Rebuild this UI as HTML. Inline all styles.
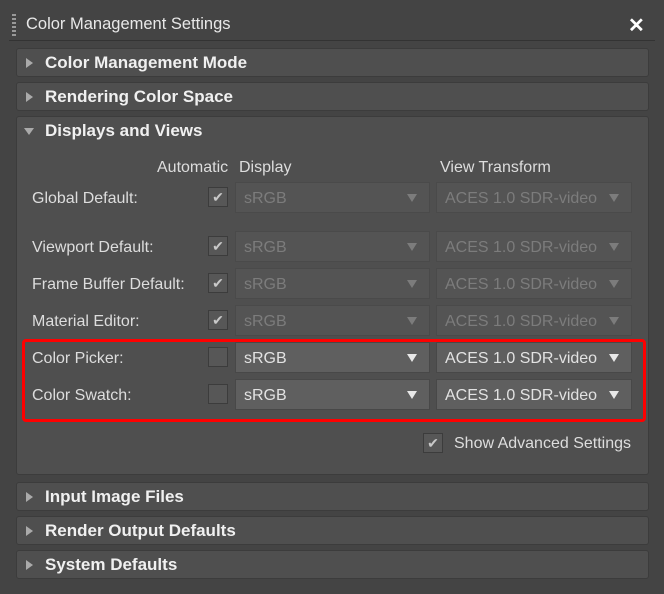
<!DOCTYPE html><html><head><style>
*{margin:0;padding:0;box-sizing:border-box}
body{width:664px;height:594px;background:#444;font-family:"Liberation Sans",sans-serif;font-size:16px;color:#ddd;position:relative;overflow:hidden}
.a{position:absolute}
.bar{position:absolute;left:16px;width:633px;height:29px;background:#4f4f4f;border:1px solid #3c3c3c;border-radius:3px}
.bar b{position:absolute;left:28px;top:4px;font-size:17px;color:#f0f0f0}
.tri{position:absolute;left:9px;top:9px;width:0;height:0;border-left:7px solid #aaa;border-top:5px solid transparent;border-bottom:5px solid transparent}
.lbl{position:absolute;left:32px;font-size:16px;color:#ddd}
.dd{position:absolute;height:31px;border:1px solid #4a4a4a;background:#545454;color:#7c7c7c;padding:7px 8px 0;font-size:16px}
.dd.on{background:#5f5f5f;color:#e2e2e2;border-color:#484848}
.dd:after{content:"";position:absolute;right:12px;top:11px;border-top:8px solid #7c7c7c;border-left:5px solid transparent;border-right:5px solid transparent}
.dd.on:after{border-top-color:#e8e8e8}
.cb{position:absolute;left:208px;width:20px;height:20px;background:#575757;border:1px solid #3c3c3c;color:#c8c8c8;font-size:14px;line-height:18px;text-align:center}
</style></head><body>
<div class="a" style="left:12px;top:14px;width:4px;height:22px;border-left:2px dotted #999;border-right:2px dotted #999"></div>
<div class="a" style="left:26px;top:15px;font-size:16.5px;color:#e8e8e8">Color Management Settings</div>
<div class="a" style="left:628px;top:13px;font-size:20px;font-weight:bold;color:#fff">✕</div>
<div class="a" style="left:9px;top:40px;width:646px;height:1px;background:#333"></div>
<div class="bar" style="top:48px"><span class="tri"></span><b>Color Management Mode</b></div>
<div class="bar" style="top:82px"><span class="tri"></span><b>Rendering Color Space</b></div>
<div class="bar" style="top:116px;height:359px"><span class="a" style="left:7px;top:11px;border-top:7px solid #aaa;border-left:5px solid transparent;border-right:5px solid transparent"></span><b>Displays and Views</b></div>
<div class="a" style="left:157px;top:159px">Automatic</div>
<div class="a" style="left:239px;top:159px">Display</div>
<div class="a" style="left:440px;top:159px">View Transform</div>

<div class="lbl" style="top:190px">Global Default:</div>
<div class="cb" style="top:187px">✔</div>
<div class="dd" style="left:235px;top:182px;width:195px">sRGB</div>
<div class="dd" style="left:436px;top:182px;width:196px">ACES 1.0 SDR-video</div>

<div class="lbl" style="top:239px">Viewport Default:</div>
<div class="cb" style="top:236px">✔</div>
<div class="dd" style="left:235px;top:231px;width:195px">sRGB</div>
<div class="dd" style="left:436px;top:231px;width:196px">ACES 1.0 SDR-video</div>

<div class="lbl" style="top:276px">Frame Buffer Default:</div>
<div class="cb" style="top:273px">✔</div>
<div class="dd" style="left:235px;top:268px;width:195px">sRGB</div>
<div class="dd" style="left:436px;top:268px;width:196px">ACES 1.0 SDR-video</div>

<div class="lbl" style="top:313px">Material Editor:</div>
<div class="cb" style="top:310px">✔</div>
<div class="dd" style="left:235px;top:305px;width:195px">sRGB</div>
<div class="dd" style="left:436px;top:305px;width:196px">ACES 1.0 SDR-video</div>

<div class="lbl" style="top:350px">Color Picker:</div>
<div class="cb" style="top:347px"></div>
<div class="dd on" style="left:235px;top:342px;width:195px">sRGB</div>
<div class="dd on" style="left:436px;top:342px;width:196px">ACES 1.0 SDR-video</div>

<div class="lbl" style="top:387px">Color Swatch:</div>
<div class="cb" style="top:384px"></div>
<div class="dd on" style="left:235px;top:379px;width:195px">sRGB</div>
<div class="dd on" style="left:436px;top:379px;width:196px">ACES 1.0 SDR-video</div>

<div class="a" style="left:22px;top:339px;width:624px;height:83px;border:3px solid #f00;border-radius:4px"></div>

<div class="cb" style="left:423px;top:433px">✔</div>
<div class="a" style="left:454px;top:435px">Show Advanced Settings</div>

<div class="bar" style="top:482px"><span class="tri"></span><b>Input Image Files</b></div>
<div class="bar" style="top:516px"><span class="tri"></span><b>Render Output Defaults</b></div>
<div class="bar" style="top:550px"><span class="tri"></span><b>System Defaults</b></div>
</body></html>
